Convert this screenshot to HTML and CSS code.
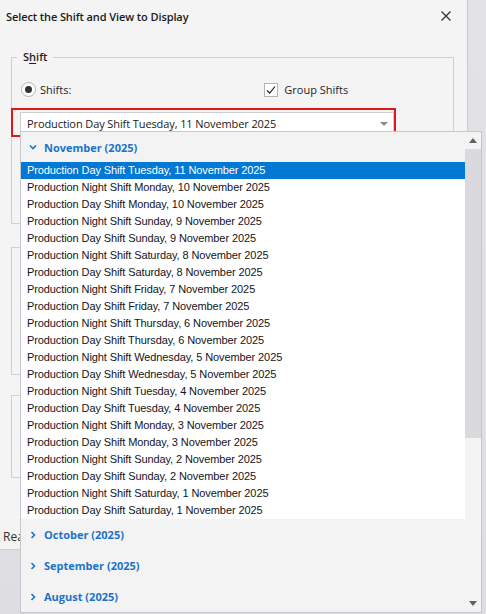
FILE: index.html
```html
<!DOCTYPE html>
<html>
<head>
<meta charset="utf-8">
<link rel="stylesheet" href="styles.css">
</head>
<body>
<div class="screen">
  <div class="dialog">
    <div class="titlebar">
      <span class="title">Select the Shift and View to Display</span>
      <svg class="close" width="10" height="10" viewBox="0 0 10 10"><path d="M0.5 0.5 L9.5 9.5 M9.5 0.5 L0.5 9.5" stroke="#333" stroke-width="1.3" fill="none"/></svg>
    </div>
    <div class="content">
      <div class="group shift-group">
        <div class="legend">S<u>h</u>ift</div>
        <div class="options">
          <label class="radio-row"><span class="radio"><span class="dot"></span></span><span>Shifts:</span></label>
          <label class="check-row"><span class="check"><svg width="12" height="12" viewBox="0 0 12 12"><path d="M2 6.5 L4.7 9.2 L10 2.5" stroke="#222" stroke-width="1.2" fill="none"/></svg></span><span>Group Shifts</span></label>
        </div>
        <div class="combo-highlight">
          <div class="combo">
            <span class="combo-text">Production Day Shift Tuesday, 11 November 2025</span>
            <span class="combo-arrow"></span>
          </div>
        </div>
      </div>
      <div class="group box2"></div>
      <div class="group box3"></div>
      <div class="status">Ready</div>
    </div>
  </div>

  <div class="popup">
    <div class="popup-main">
      <div class="group-header open">
        <svg class="chev" width="8" height="8" viewBox="0 0 8 8"><path d="M1 2.5 L4 5.5 L7 2.5" stroke="#1a73c9" stroke-width="1.6" fill="none"/></svg>
        <span>November (2025)</span>
      </div>
      <ul class="items">
        <li class="selected">Production Day Shift Tuesday, 11 November 2025</li>
        <li>Production Night Shift Monday, 10 November 2025</li>
        <li>Production Day Shift Monday, 10 November 2025</li>
        <li>Production Night Shift Sunday, 9 November 2025</li>
        <li>Production Day Shift Sunday, 9 November 2025</li>
        <li>Production Night Shift Saturday, 8 November 2025</li>
        <li>Production Day Shift Saturday, 8 November 2025</li>
        <li>Production Night Shift Friday, 7 November 2025</li>
        <li>Production Day Shift Friday, 7 November 2025</li>
        <li>Production Night Shift Thursday, 6 November 2025</li>
        <li>Production Day Shift Thursday, 6 November 2025</li>
        <li>Production Night Shift Wednesday, 5 November 2025</li>
        <li>Production Day Shift Wednesday, 5 November 2025</li>
        <li>Production Night Shift Tuesday, 4 November 2025</li>
        <li>Production Day Shift Tuesday, 4 November 2025</li>
        <li>Production Night Shift Monday, 3 November 2025</li>
        <li>Production Day Shift Monday, 3 November 2025</li>
        <li>Production Night Shift Sunday, 2 November 2025</li>
        <li>Production Day Shift Sunday, 2 November 2025</li>
        <li>Production Night Shift Saturday, 1 November 2025</li>
        <li>Production Day Shift Saturday, 1 November 2025</li>
      </ul>
      <div class="group-header">
        <svg class="chev" width="8" height="8" viewBox="0 0 8 8"><path d="M2.5 1 L5.5 4 L2.5 7" stroke="#1a73c9" stroke-width="1.6" fill="none"/></svg>
        <span>October (2025)</span>
      </div>
      <div class="group-header">
        <svg class="chev" width="8" height="8" viewBox="0 0 8 8"><path d="M2.5 1 L5.5 4 L2.5 7" stroke="#1a73c9" stroke-width="1.6" fill="none"/></svg>
        <span>September (2025)</span>
      </div>
      <div class="group-header">
        <svg class="chev" width="8" height="8" viewBox="0 0 8 8"><path d="M2.5 1 L5.5 4 L2.5 7" stroke="#1a73c9" stroke-width="1.6" fill="none"/></svg>
        <span>August (2025)</span>
      </div>
    </div>
    <div class="scrollbar">
      <div class="sb-arrow up"></div>
      <div class="sb-track"><div class="sb-thumb"></div></div>
      <div class="sb-arrow down"></div>
    </div>
  </div>
</div>
</body>
</html>
```
FILE: styles.css
```css
* { box-sizing: border-box; }
html, body { margin: 0; padding: 0; }
body {
  width: 486px;
  height: 614px;
  overflow: hidden;
  font-family: "Open Sans", "Noto Sans", sans-serif;
  font-size: 11px;
  color: #1e1e1e;
}
.screen {
  position: relative;
  width: 486px;
  height: 614px;
  background: linear-gradient(180deg, #e3e3e7 0%, #dedee2 100%);
}
.dialog {
  width: 468px;
  height: 550px;
  background: #f4f4f4;
  border-right: 1px solid #c9c9cf;
  border-bottom: 1px solid #cfcfd3;
  display: flex;
  flex-direction: column;
}
.titlebar {
  height: 32px;
  display: flex;
  align-items: center;
  justify-content: space-between;
  padding: 0 16px 0 6px;
}
.title {
  font-weight: 600;
  font-size: 11px;
  letter-spacing: -0.1px;
  color: #1a1a1a;
}
.close { display: block; }
.content {
  padding: 25px 13px 0 11px;
  display: flex;
  flex-direction: column;
  position: relative;
  flex: 1;
}
.group {
  border: 1px solid #cfcfdc;
  position: relative;
}
.shift-group {
  height: 167px;
}
.legend {
  position: absolute;
  top: -9px;
  left: 5px;
  padding: 0 6px;
  background: #f4f4f4;
  font-weight: 600;
  font-size: 11px;
  line-height: 16px;
}
.legend u { text-decoration-thickness: 1px; text-underline-offset: 2px; }
.options {
  display: flex;
  align-items: center;
  padding: 23px 0 0 9px;
  height: 40px;
}
.radio-row, .check-row {
  display: flex;
  align-items: center;
  gap: 4px;
}
.radio {
  width: 15px;
  height: 15px;
  border-radius: 50%;
  border: 1px solid #b4b4b4;
  background: #fff;
  display: flex;
  align-items: center;
  justify-content: center;
}
.dot {
  width: 7px;
  height: 7px;
  border-radius: 50%;
  background: #333;
}
.check-row { margin-left: 193px; gap: 6px; }
.check {
  width: 14px;
  height: 14px;
  border: 1px solid #b4b4b4;
  background: #fff;
  display: flex;
  align-items: center;
  justify-content: center;
}
.check svg { display: block; }
.combo-highlight {
  margin: 10px 0 0 -1px;
  width: 385px;
  height: 29px;
  border: 2px solid #e3161e;
  padding: 2px 0 0 7px;
}
.combo {
  height: 22px;
  background: #fff;
  border: 1px solid #cdcdd2;
  border-bottom: none;
  display: flex;
  align-items: center;
  justify-content: space-between;
  padding: 0 5px 0 6px;
}
.combo-text { font-size: 11px; letter-spacing: -0.1px; color: #1a1a1a; white-space: nowrap; }
.combo-arrow {
  width: 0; height: 0;
  border-left: 4px solid transparent;
  border-right: 4px solid transparent;
  border-top: 4px solid #8a8a8a;
}
.box2 { margin-top: 23px; height: 128px; }
.box3 { margin-top: 20px; height: 83px; }
.status {
  position: absolute;
  left: 3px;
  bottom: 4px;
  font-size: 12px;
  color: #333;
}

/* Popup list */
.popup {
  position: absolute;
  left: 20px;
  top: 131px;
  width: 462px;
  height: 482px;
  background: #f3f3f3;
  border: 1px solid #c6c6cc;
  display: flex;
}
.popup-main {
  width: 444px;
  display: flex;
  flex-direction: column;
}
.group-header {
  height: 31px;
  display: flex;
  align-items: center;
  padding-left: 8px;
  gap: 7px;
  color: #1a73c9;
  font-weight: 700;
  font-size: 11px;
}
.group-header.open { height: 30px; }
.chev { display: block; }
.items {
  list-style: none;
  margin: 0;
  padding: 0;
  background: #fff;
}
.items li {
  height: 17px;
  line-height: 17px;
  padding-left: 6px;
  font-family: "Liberation Sans", Arial, sans-serif;
  font-size: 11px;
  letter-spacing: -0.1px;
  color: #141420;
  white-space: nowrap;
}
.items li.selected {
  background: #0078d4;
  color: #fff;
}
.scrollbar {
  width: 16px;
  display: flex;
  flex-direction: column;
}
.sb-arrow {
  height: 17px;
  display: flex;
  align-items: center;
  justify-content: center;
}
.sb-arrow.up::before, .sb-arrow.down::before {
  content: "";
  width: 0; height: 0;
  border-left: 4px solid transparent;
  border-right: 4px solid transparent;
}
.sb-arrow.up::before { border-bottom: 5px solid #606060; }
.sb-arrow.down::before { border-top: 5px solid #606060; }
.sb-track { flex: 1; }
.sb-thumb {
  height: 289px;
  background: #dadade;
}
```
